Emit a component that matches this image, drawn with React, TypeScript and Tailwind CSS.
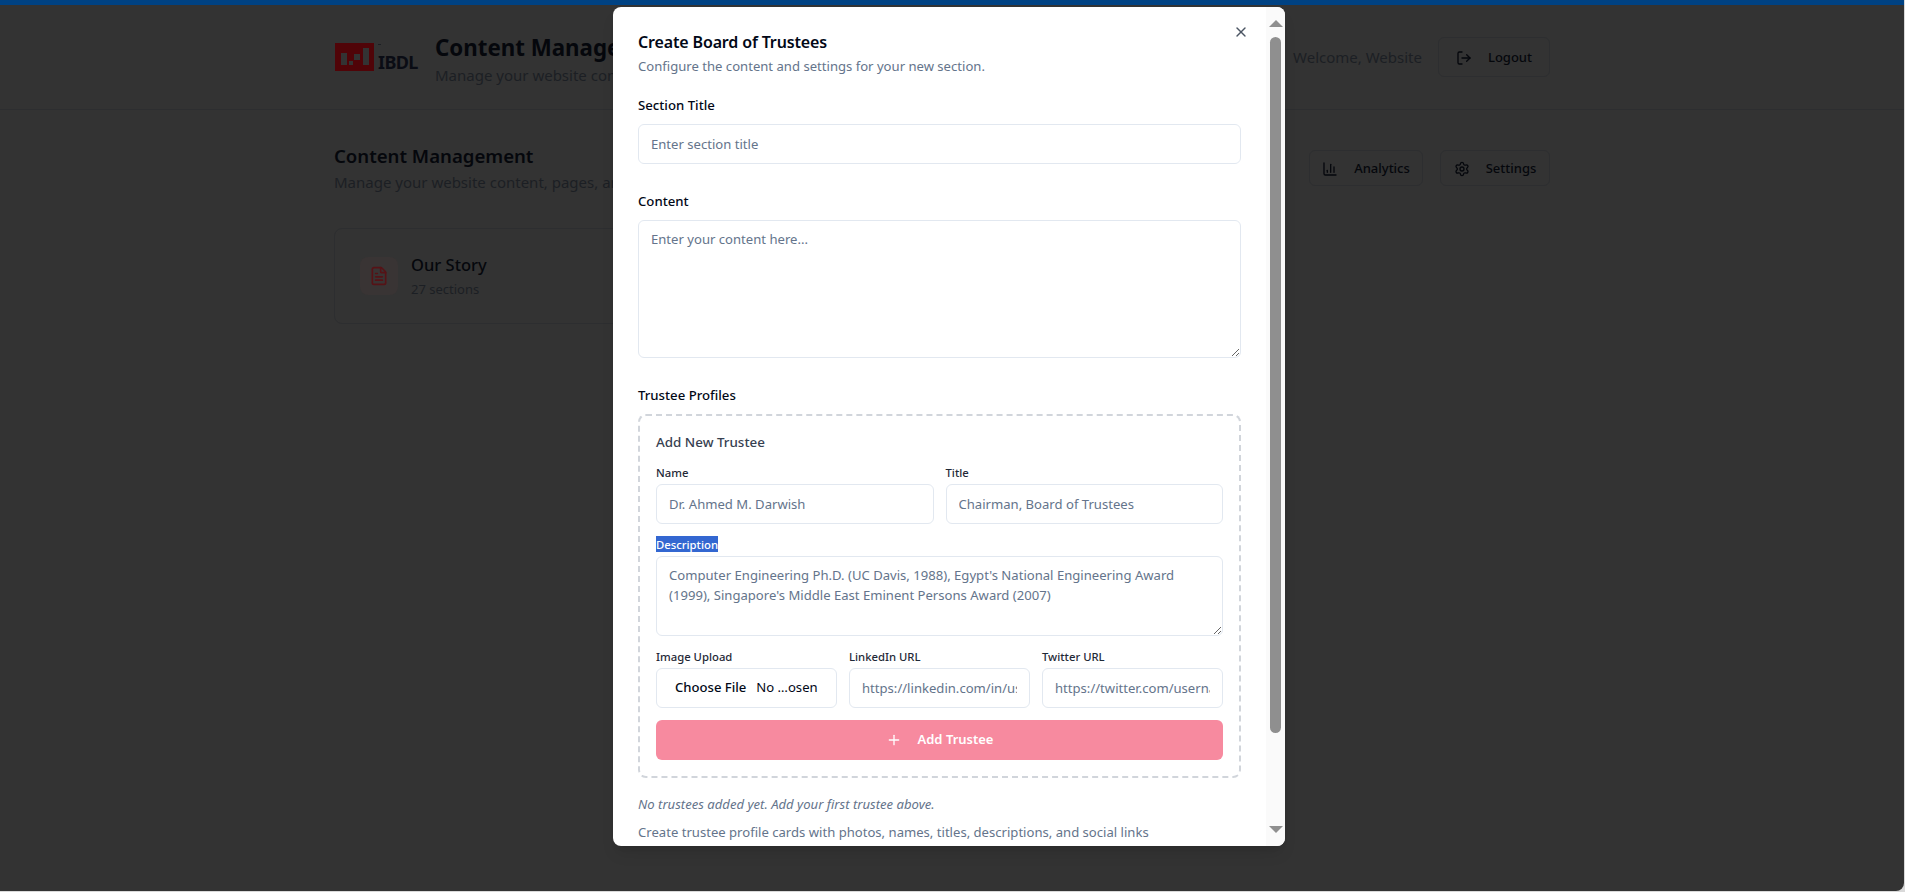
import { ChartColumn, FileText, LogOut, Plus, Settings, X } from "lucide-react";

const inputCls =
  "block h-10 w-full rounded-md border border-[#e2e8f0] bg-white px-3 pb-px text-[13.1px] text-[#64748b] placeholder:text-[#64748b] outline-none";
const areaCls =
  "block w-full rounded-md border border-[#e2e8f0] bg-white px-3 pt-2 pb-2 text-[13.1px] leading-5 text-[#64748b] placeholder:text-[#64748b] outline-none";
const smallLabel = "block pt-px mb-[3px] text-[11.3px] leading-4 font-medium text-[#1f2937]";
const topLabel = "block text-[13.2px] leading-5 font-medium text-[#020817]";

function PageBehind() {
  return (
    <div className="flex h-[891px] w-[1904px] flex-col rounded-br-lg bg-[#333333] text-[#05070c]">
      <div className="h-[5px] bg-[#004283]" />
      <header className="flex h-[105px] items-center justify-between border-b border-[#2d2e30] pr-[354px] pl-[335px]">
        <div className="flex items-center">
          <div className="relative flex w-[83px] items-end">
            <svg width="39" height="28" viewBox="0 0 39 28" className="shrink-0">
              <rect width="39" height="28" fill="#500408" />
              <rect x="6" y="10" width="6" height="12" fill="#333333" />
              <rect x="14" y="18" width="4" height="4" fill="#333333" />
              <rect x="19" y="11" width="6" height="6" fill="#333333" />
              <rect x="28" y="5" width="6" height="17" fill="#333333" />
            </svg>
            <span className="ml-1 text-[18px] leading-[18px] font-bold tracking-[-0.6px] text-[#0a0c14]">IBDL</span>
            <span className="absolute top-[1px] left-[43px] h-px w-[3px] bg-[#1c1f24]" />
          </div>
          <div className="ml-[17px] pt-1">
            <div className="text-[22.3px] leading-8 font-bold whitespace-nowrap">Content Management</div>
            <div className="-mt-px text-[15px] leading-6 text-[#1c1f24]">Manage your website content</div>
          </div>
        </div>
        <div className="flex items-center">
          <span className="text-[15px] text-[#1c1f24]">Welcome, Website</span>
          <button className="ml-4 flex h-10 w-[112px] items-center justify-center gap-4 rounded-md border border-[#2d2e30] pt-px text-[13px] font-medium">
            <LogOut size={16} />
            Logout
          </button>
        </div>
      </header>
      <main className="pr-[354px] pl-[334px]">
        <div className="mt-[32px] flex items-center justify-between">
          <div>
            <div className="text-[18.6px] leading-7 font-semibold">Content Management</div>
            <div className="text-[15px] leading-6 text-[#1c1f24]">Manage your website content, pages, and sections</div>
          </div>
          <div className="flex gap-[17px]">
            <button className="flex h-9 w-[114px] items-center justify-center gap-4 rounded-md border border-[#2d2e30] pt-px text-[13px] font-medium">
              <ChartColumn size={16} />
              Analytics
            </button>
            <button className="flex h-9 w-[110px] items-center justify-center gap-4 rounded-md border border-[#2d2e30] pt-px text-[13px] font-medium">
              <Settings size={16} />
              Settings
            </button>
          </div>
        </div>
        <div className="mt-[34px] flex h-[96px] w-[420px] items-center gap-[13px] rounded-lg border border-[#2d2e30] pl-[25px]">
          <div className="flex size-[38px] items-center justify-center rounded-lg bg-[#393434]">
            <FileText size={20} className="text-[#561216]" />
          </div>
          <div>
            <div className="text-[16.5px] leading-6 font-medium">Our Story</div>
            <div className="mt-[2px] text-[13px] leading-5 text-[#1c1f24]">27 sections</div>
          </div>
        </div>
      </main>
    </div>
  );
}

function Scrollbar() {
  return (
    <div className="absolute top-0 right-0 bottom-0 w-[19px] bg-[#fafafa]">
      <div className="absolute top-[13px] left-[3px] h-0 w-0 border-x-[7px] border-b-[7px] border-x-transparent border-b-[#8f8f8f]" />
      <div className="absolute top-[30px] left-[4px] h-[696px] w-[11px] rounded-full bg-[#8f8f8f]" />
      <div className="absolute top-[819px] left-[3px] h-0 w-0 border-x-[7px] border-t-[7px] border-x-transparent border-t-[#8f8f8f]" />
    </div>
  );
}

function Modal() {
  return (
    <div className="absolute top-[7px] left-[613px] h-[839px] w-[672px] overflow-hidden rounded-lg bg-white pt-[21px] pl-[25px] shadow-lg">
      <button className="absolute top-[17px] left-[620px] text-[#4b5563]">
        <X size={16} />
      </button>
      <div className="w-[603px]">
        <h2 className="text-[16px] leading-7 font-semibold tracking-[-0.15px] text-[#020817]">Create Board of Trustees</h2>
        <p className="text-[13.1px] leading-5 text-[#64748b]">Configure the content and settings for your new section.</p>

        <label className={`${topLabel} mt-[19px] mb-[9px]`}>Section Title</label>
        <input className={inputCls} placeholder="Enter section title" />

        <label className={`${topLabel} mt-[27px] mb-[9px]`}>Content</label>
        <textarea className={`${areaCls} h-[138px]`} placeholder="Enter your content here..." />

        <label className={`${topLabel} mt-[27px] mb-[9px]`}>Trustee Profiles</label>
        <div className="rounded-lg border-2 border-dashed border-[#d1d5db] p-4">
          <h4 className="text-[13.4px] leading-5 font-medium text-[#374151]">Add New Trustee</h4>
          <div className="mt-3 grid grid-cols-2 gap-3">
            <div>
              <label className={smallLabel}>Name</label>
              <input className={inputCls} placeholder="Dr. Ahmed M. Darwish" />
            </div>
            <div>
              <label className={smallLabel}>Title</label>
              <input className={inputCls} placeholder="Chairman, Board of Trustees" />
            </div>
          </div>
          <div className="mt-3">
            <label className="mb-1 block h-4 text-[11.3px] font-medium">
              <span className="inline-block h-4 bg-[#3367d1] pt-px align-top leading-[15px] text-white">Description</span>
            </label>
            <textarea
              className={`${areaCls} h-20`}
              placeholder="Computer Engineering Ph.D. (UC Davis, 1988), Egypt's National Engineering Award (1999), Singapore's Middle East Eminent Persons Award (2007)"
            />
          </div>
          <div className="mt-3 grid grid-cols-3 gap-3">
            <div>
              <label className={smallLabel}>Image Upload</label>
              <input
                type="file"
                className="block h-10 w-full rounded-md border border-[#e2e8f0] bg-white px-3 py-2 text-[13.1px] text-[#020817] file:border-0 file:bg-transparent file:px-[6px] file:py-px file:text-[13.1px] file:font-medium file:text-[#020817]"
              />
            </div>
            <div>
              <label className={smallLabel}>LinkedIn URL</label>
              <input className={inputCls} placeholder="https://linkedin.com/in/username" />
            </div>
            <div>
              <label className={smallLabel}>Twitter URL</label>
              <input className={inputCls} placeholder="https://twitter.com/username" />
            </div>
          </div>
          <button className="mt-3 flex h-10 w-full items-center justify-center gap-4 rounded-md bg-[#f78a9f] text-[13px] font-semibold text-white">
            <Plus size={16} />
            Add Trustee
          </button>
        </div>
        <p className="mt-4 text-[13.1px] leading-5 text-[#64748b] italic">No trustees added yet. Add your first trustee above.</p>
        <p className="mt-2 text-[13.1px] leading-5 text-[#64748b]">
          Create trustee profile cards with photos, names, titles, descriptions, and social links
        </p>
      </div>
      <Scrollbar />
    </div>
  );
}

export default function App() {
  return (
    <div className="relative h-[892px] w-[1905px] overflow-hidden bg-[#d9d9d9] font-['Noto_Sans',sans-serif]">
      <PageBehind />
      <Modal />
    </div>
  );
}
